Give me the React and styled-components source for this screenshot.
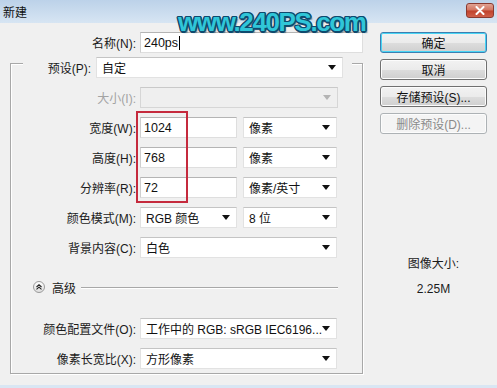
import React from 'react';
import styled, { createGlobalStyle } from 'styled-components';

const GlobalStyle = createGlobalStyle`
    html, body {
        margin: 0;
        padding: 0;
        background: #f0f0f0;
    }
    body {
        font-family: "Liberation Sans", "Noto Sans CJK SC", sans-serif;
        font-size: 12px;
        color: #1b1b1b;
    }
`;

const Window = styled.div`
    position: relative;
    width: 497px;
    height: 388px;
    overflow: hidden;
    display: flex;
    flex-direction: column;
    background: #f0f0f0;
`;

const TitleBar = styled.div`
    flex: none;
    height: 23px;
    display: flex;
    align-items: center;
    justify-content: space-between;
    padding: 0 3px 0 3px;
    box-sizing: border-box;
    background: linear-gradient(#bcd2e9, #d7e5f3);
`;

const Title = styled.span`
    font-size: 12px;
    color: #111;
`;

const CloseButton = styled.div`
    width: 28px;
    height: 15px;
    margin-top: -3px;
    border: 1px solid #8a3a30;
    border-radius: 3px;
    box-sizing: border-box;
    background: linear-gradient(#e0a394 0%, #d2735f 48%, #c0412b 52%, #d0604a 100%);
    display: flex;
    align-items: center;
    justify-content: center;
`;

const Body = styled.div`
    flex: 1;
    display: flex;
    padding-top: 9px;
`;

const BottomStrip = styled.div`
    flex: none;
    height: 3px;
    background: #d9e6f3;
`;

const LeftCol = styled.div`
    width: 363px;
    display: flex;
    flex-direction: column;
`;

const NameRow = styled.div`
    display: grid;
    grid-template-columns: 136px 223px;
    column-gap: 4px;
    align-items: center;
`;

const Label = styled.div`
    text-align: right;
    white-space: nowrap;
    color: ${(p) => (p.$disabled ? '#a3a3a3' : '#1b1b1b')};
`;

const TextBox = styled.div`
    height: 21px;
    box-sizing: border-box;
    display: flex;
    align-items: center;
    padding-left: 3px;
    background: #fff;
    border: 1px solid #dedede;
    border-top-color: #b4b4b4;
    border-left-color: #cfcfcf;
    font-size: 12.5px;
    color: #111;
    width: ${(p) => p.$w}px;
`;

const Caret = styled.span`
    display: inline-block;
    width: 1px;
    height: 14px;
    margin-left: 1px;
    background: #000;
`;

const SelectBox = styled.div`
    height: 21px;
    box-sizing: border-box;
    display: flex;
    align-items: center;
    justify-content: space-between;
    padding: 0 4px 0 5px;
    width: ${(p) => p.$w}px;
    background: ${(p) => (p.$disabled ? '#efefef' : '#fff')};
    border: 1px solid ${(p) => (p.$disabled ? '#d6d6d6' : '#e2e2e2')};
    border-top-color: ${(p) => (p.$disabled ? '#c9c9c9' : '#c4c4c4')};
    color: #111;
    white-space: nowrap;
`;

const Arrow = styled.span`
    width: 0;
    height: 0;
    margin-right: 2px;
    border-left: 4px solid transparent;
    border-right: 4px solid transparent;
    border-top: 5px solid ${(p) => (p.$disabled ? '#b4b4b4' : '#111')};
`;

const GroupBox = styled.div`
    position: relative;
    margin: 10px 0 0 10px;
    width: 353px;
    height: 311px;
    box-sizing: border-box;
    border: 1px solid #a8a8a8;
    box-shadow: 1px 1px 0 #fff, inset 1px 1px 0 #fff;
    display: flex;
    flex-direction: column;
`;

const LegendRow = styled.div`
    margin: -7px 0 0 12px;
    width: 329px;
    box-sizing: border-box;
    padding-right: 9px;
    background: #f0f0f0;
    display: grid;
    grid-template-columns: 68px 247px;
    column-gap: 5px;
    align-items: center;
`;

const FormRow = styled.div`
    margin-top: ${(p) => p.$top ?? 9}px;
    display: grid;
    grid-template-columns: 125px auto;
    column-gap: 4px;
    align-items: center;
`;

const Fields = styled.div`
    display: flex;
    gap: 6px;
`;

const AdvancedRow = styled.div`
    margin: 22px 24px 0 22px;
    height: 14px;
    display: flex;
    align-items: center;
`;

const AdvancedText = styled.span`
    margin: 0 5px 0 7px;
    color: #1b1b1b;
`;

const Rule = styled.div`
    flex: 1;
    height: 1px;
    background: #a8a8a8;
    box-shadow: 0 1px 0 #fff;
`;

const RightCol = styled.div`
    margin-left: 17px;
    width: 107px;
    display: flex;
    flex-direction: column;
    gap: 6px;
`;

const Button = styled.div`
    height: 21px;
    box-sizing: border-box;
    border-radius: 3px;
    display: flex;
    align-items: center;
    justify-content: center;
    border: 1px solid ${(p) => (p.$default ? '#3c7fb1' : p.$disabled ? '#adb2b5' : '#707070')};
    background: ${(p) =>
        p.$disabled
            ? '#f4f4f4'
            : 'linear-gradient(#f2f2f2 0%, #ebebeb 50%, #dddddd 51%, #cfcfcf 100%)'};
    box-shadow: ${(p) => (p.$default ? 'inset 0 0 0 1px #48d5f5' : 'inset 0 0 0 1px #fcfcfc')};
    color: ${(p) => (p.$disabled ? '#8a8a8a' : '#111')};
`;

const SizeInfo = styled.div`
    margin-top: 116px;
    display: flex;
    flex-direction: column;
    align-items: center;
    gap: 9px;
    line-height: 16px;
    color: #1b1b1b;
`;

const Watermark = styled.div`
    position: absolute;
    left: 178px;
    top: 7px;
    font-family: "Liberation Sans", sans-serif;
    font-weight: bold;
    font-size: 26px;
    letter-spacing: -1.4px;
    line-height: 30px;
    color: #30c6d8;
    text-shadow:
        1.5px 0 0 #0f4a6e, -1.5px 0 0 #0f4a6e, 0 1.5px 0 #0f4a6e, 0 -1.5px 0 #0f4a6e,
        1px 1px 0 #0f4a6e, -1px -1px 0 #0f4a6e, 1px -1px 0 #0f4a6e, -1px 1px 0 #0f4a6e,
        2px 2px 1px rgba(10, 50, 80, 0.5);
`;

const Highlight = styled.div`
    position: absolute;
    left: 136px;
    top: 111px;
    width: 52px;
    height: 92px;
    box-sizing: border-box;
    border: 2px solid #c52a3d;
`;

const CollapseIcon = () => (
    <svg width="12" height="12" viewBox="0 0 12 12">
        <defs>
            <linearGradient id="ci" x1="0" y1="0" x2="0" y2="1">
                <stop offset="0" stopColor="#ffffff" />
                <stop offset="1" stopColor="#dcdcdc" />
            </linearGradient>
        </defs>
        <circle cx="6" cy="6" r="5.5" fill="url(#ci)" stroke="#9a9a9a" />
        <path d="M3.5 6 L6 3.8 L8.5 6 M3.5 8.4 L6 6.2 L8.5 8.4" fill="none" stroke="#222" strokeWidth="1.1" />
    </svg>
);

const CloseX = () => (
    <svg width="10" height="9" viewBox="0 0 10 9">
        <path d="M1.5 1 L8.5 8 M8.5 1 L1.5 8" stroke="#fff" strokeWidth="2" strokeLinecap="round" />
    </svg>
);

const Select = ({ w, children, disabled }) => (
    <SelectBox $w={w} $disabled={disabled}>
        <span>{children}</span>
        <Arrow $disabled={disabled} />
    </SelectBox>
);

const rows = [
    { label: '宽度(W):', value: '1024', unit: '像素' },
    { label: '高度(H):', value: '768', unit: '像素' },
    { label: '分辨率(R):', value: '72', unit: '像素/英寸' },
];

const App = () => {
    return (
        <Window>
            <GlobalStyle />
            <TitleBar>
                <Title>新建</Title>
                <CloseButton>
                    <CloseX />
                </CloseButton>
            </TitleBar>
            <Body>
                <LeftCol>
                    <NameRow>
                        <Label>名称(N):</Label>
                        <TextBox $w={223}>
                            240ps<Caret />
                        </TextBox>
                    </NameRow>
                    <GroupBox>
                        <LegendRow>
                            <Label>预设(P):</Label>
                            <Select w={247}>自定</Select>
                        </LegendRow>
                        <FormRow>
                            <Label $disabled>大小(I):</Label>
                            <Select w={198} disabled>{''}</Select>
                        </FormRow>
                        {rows.map((row) => (
                            <FormRow key={row.label}>
                                <Label>{row.label}</Label>
                                <Fields>
                                    <TextBox $w={97}>{row.value}</TextBox>
                                    <Select w={94}>{row.unit}</Select>
                                </Fields>
                            </FormRow>
                        ))}
                        <FormRow>
                            <Label>颜色模式(M):</Label>
                            <Fields>
                                <Select w={97}>RGB 颜色</Select>
                                <Select w={94}>8 位</Select>
                            </Fields>
                        </FormRow>
                        <FormRow>
                            <Label>背景内容(C):</Label>
                            <Select w={197}>白色</Select>
                        </FormRow>
                        <AdvancedRow>
                            <CollapseIcon />
                            <AdvancedText>高级</AdvancedText>
                            <Rule />
                        </AdvancedRow>
                        <FormRow $top={24}>
                            <Label>颜色配置文件(O):</Label>
                            <Select w={197}>工作中的 RGB: sRGB IEC6196...</Select>
                        </FormRow>
                        <FormRow>
                            <Label>像素长宽比(X):</Label>
                            <Select w={197}>方形像素</Select>
                        </FormRow>
                    </GroupBox>
                </LeftCol>
                <RightCol>
                    <Button $default>确定</Button>
                    <Button>取消</Button>
                    <Button>存储预设(S)...</Button>
                    <Button $disabled>删除预设(D)...</Button>
                    <SizeInfo>
                        <span>图像大小:</span>
                        <span>2.25M</span>
                    </SizeInfo>
                </RightCol>
            </Body>
            <BottomStrip />
            <Watermark>www.240PS.com</Watermark>
            <Highlight />
        </Window>
    );
};

export default App;
